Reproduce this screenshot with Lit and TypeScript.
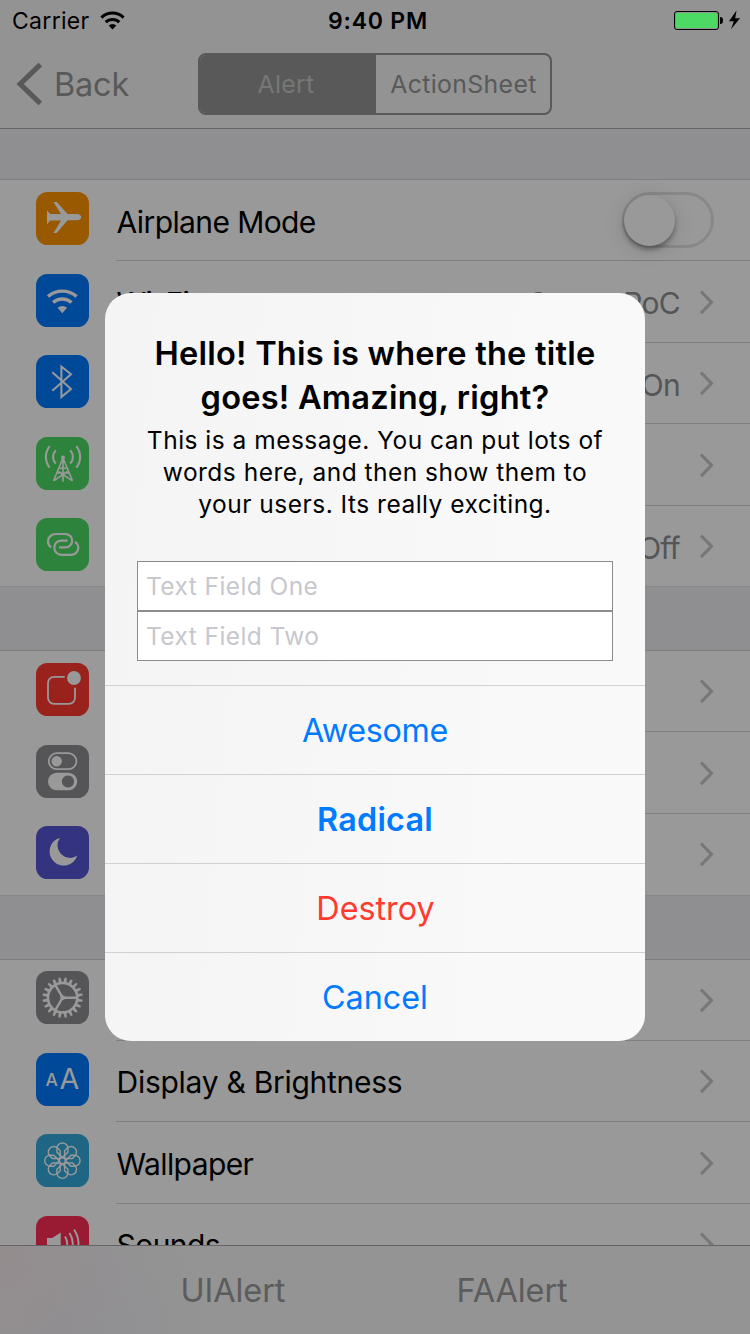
import { LitElement, html, svg, css, nothing } from "lit";
import { customElement, property } from "lit/decorators.js";
import { classMap } from "lit/directives/class-map.js";

interface Item {
  icon: string;
  label?: string;
  track?: string;
  value?: string;
  toggle?: boolean;
}

const arcs = (n: number, draw: (angle: number) => unknown) =>
  Array.from({ length: n }, (_, i) => draw((i * 360) / n));

const glyphs: Record<string, { tint: string; art: unknown }> = {
  airplane: {
    tint: "#ff9500",
    art: svg`<path fill="#fff" d="M11 18.2 14.3 22H25L17.5 10h3.2L31.6 22.1H41c2.8 0 4.2 1.6 4.2 3.1s-1.4 3.1-4.2 3.1h-9.4L20.7 41h-3.2L25 28.4H14.3L11 32.2Z"/>`,
  },
  wifi: {
    tint: "#007aff",
    art: svg`<g fill="none" stroke="#fff" stroke-width="3.4"><path d="M12 22.5a21.8 21.8 0 0 1 28.6 0"/><path d="M17.1 28.5a14 14 0 0 1 18.4 0"/></g><path fill="#fff" d="M26.3 39.2 21.6 33.8a7.2 7.2 0 0 1 9.4 0Z"/>`,
  },
  bluetooth: {
    tint: "#007aff",
    art: svg`<path fill="none" stroke="#fff" stroke-width="2" d="M16.3 17.3 35 33.9 25.4 42V11.5L35 19.2 16.3 35.7"/>`,
  },
  cellular: {
    tint: "#4cd964",
    art: svg`<g fill="none" stroke="#fff" stroke-width="1.6"><path d="M27 20.5V44.7M27 21 17.6 43.8M27 21 36.5 43.8M23.2 31.2h7.6M21.2 36h11.6M17.6 43.8 31.5 34.5M36.5 43.8 22.5 34.5"/><g stroke-width="2.1"><path d="M19.8 13.2a9.6 9.6 0 0 0 0 13.4M34.2 13.2a9.6 9.6 0 0 1 0 13.4M13.7 9.2a17 17 0 0 0 0 21.4M40.3 9.2a17 17 0 0 1 0 21.4"/></g></g><circle cx="27" cy="20.5" r="2" fill="#fff"/>`,
  },
  hotspot: {
    tint: "#4cd964",
    art: svg`<g fill="none" stroke="#fff" stroke-width="2.2"><path d="M15.2 29.3C13 27.8 12 25.6 12 23.4 12 19.2 15.5 16 19.6 16h9.6c4 0 7 2.8 7 6.6s-3 6.8-6.8 6.8H23"/><path d="M31.5 22.6h-6.2c-4 0-7 2.9-7 7s3.1 7.3 7.2 7.3h9.3c4.2 0 7.5-3 7.5-7.2 0-2.3-1.2-4.5-3.4-5.8"/></g>`,
  },
  notifications: {
    tint: "#ff3b30",
    art: svg`<path fill="none" stroke="#fff" stroke-width="1.8" d="M28.7 13.9H18a6 6 0 0 0-6 6v14.9a6 6 0 0 0 6 6h15a6 6 0 0 0 6-6V24.7"/><circle cx="38" cy="15" r="6.9" fill="#fff"/>`,
  },
  controls: {
    tint: "#8e8e93",
    art: svg`<rect x="12.8" y="8.2" width="27.6" height="16" rx="8" fill="none" stroke="#fff" stroke-width="1.8"/><circle cx="20.7" cy="16.2" r="5.2" fill="#fff"/><path fill="#fff" fill-rule="evenodd" d="M20.7 27.8h11.8a8.7 8.7 0 0 1 0 17.4H20.7a8.7 8.7 0 0 1 0-17.4ZM32 30.4a6.1 6.1 0 1 0 .01 0Z"/>`,
  },
  moon: {
    tint: "#5856d6",
    art: svg`<path fill="#fff" d="M24 11.7A14.2 14.2 0 1 0 41.3 29.6 12.6 12.6 0 0 1 24 11.7Z"/>`,
  },
  gear: {
    tint: "#8e8e93",
    art: svg`<g stroke="#fff" fill="none"><circle cx="26.6" cy="26.7" r="14.6" stroke-width="2.5"/>${arcs(
      20,
      (a) => svg`<path stroke="none" fill="#fff" d="M24.9 11.4 25.6 6.5h2L28.3 11.4Z" transform=${`rotate(${a + 9} 26.6 26.7)`}/>`,
    )}<path stroke-width="2.4" d="M26.6 26.7H41M26.6 26.7 19.2 13.9M26.6 26.7 19.2 39.5"/></g><circle cx="26.6" cy="26.7" r="2.4" fill="#fff"/>`,
  },
  display: {
    tint: "#007aff",
    art: svg`<g fill="#fff" font-family="Inter, sans-serif"><text x="9.4" y="32.8" font-size="17.4" font-weight="500">A</text><text x="23.6" y="36" font-size="28.6">A</text></g>`,
  },
  wallpaper: {
    tint: "#34aadc",
    art: svg`<g fill="none" stroke="#fff" stroke-width="1.4">${arcs(
      8,
      (a) => svg`<path d="M0-3.200-5.500-8.600v-3.600a5.500 5.500 0 0 1 11 0v3.600Z" transform=${`translate(26.4 26.7) rotate(${a})`}/>`,
    )}<circle cx="26.4" cy="26.7" r="3"/></g>`,
  },
  sounds: {
    tint: "#ff2d55",
    art: svg`<path fill="#fff" d="M11 22h5.2l8.500-5.400v21.800L16.200 33H11Z"/><g fill="none" stroke="#fff" stroke-width="1.9"><path d="M29 20.500q4.400 7 0 14M33.500 17q6.600 10.500 0 21M38 13.500q9 14 0 28"/></g>`,
  },
};

const groups: { name: string; items: Item[] }[] = [
  {
    name: "radios",
    items: [
      { icon: "airplane", label: "Airplane Mode", track: "mid", toggle: true },
      { icon: "wifi", label: "Wi-Fi", track: "mid", value: "Canon PoC" },
      { icon: "bluetooth", value: "On" },
      { icon: "cellular" },
      { icon: "hotspot", value: "Off" },
    ],
  },
  { name: "alerts", items: [{ icon: "notifications" }, { icon: "controls" }, { icon: "moon" }] },
  {
    name: "general",
    items: [
      { icon: "gear" },
      { icon: "display", label: "Display & Brightness", track: "loose" },
      { icon: "wallpaper", label: "Wallpaper", track: "mid" },
      { icon: "sounds", label: "Sounds", track: "mid" },
    ],
  },
];

@customElement("settings-row")
class SettingsRow extends LitElement {
  @property({ attribute: false }) item!: Item;

  static styles = css`
    :host {
      display: flex;
      align-items: stretch;
      box-sizing: border-box;
      padding-left: 36px;
    }
    .icon {
      align-self: flex-end;
      flex: none;
      width: 53px;
      height: 53px;
      margin-right: 27px;
      margin-bottom: var(--icon-drop, 16px);
    }
    .body {
      flex: 1;
      display: flex;
      align-items: center;
      border-bottom: 1px solid var(--sep, #d4d4d7);
      padding-right: 36px;
      font-size: 30px;
    }
    .label {
      flex: 1;
      padding-top: var(--text-drop, 2px);
      padding-left: 0.6px;
      white-space: nowrap;
      color: #000;
    }
    .mid {
      letter-spacing: -0.6px;
    }
    .loose {
      letter-spacing: -0.28px;
    }
    .value {
      color: #8e8e93;
      padding-top: var(--text-drop, 2px);
      margin-right: 19px;
      letter-spacing: -0.7px;
    }
    .chevron {
      width: 15px;
      height: 26px;
    }
    .switch {
      box-sizing: border-box;
      width: 92px;
      height: 56px;
      border: 3px solid #e3e3e3;
      border-radius: 28px;
    }
    .knob {
      width: 51px;
      height: 51px;
      margin-left: -1px;
      margin-top: -0.5px;
      border-radius: 50%;
      background: #fff;
      box-shadow: 0 4px 5px rgba(0, 0, 0, 0.3), 0 3px 22px rgba(0, 0, 0, 0.14);
    }
  `;

  render() {
    const { icon, label, track, value, toggle } = this.item;
    const glyph = glyphs[icon];
    return html`
      <svg class="icon" viewBox="0 0 53 53">
        <rect width="53" height="53" rx="11.5" fill=${glyph.tint} />
        ${glyph.art}
      </svg>
      <div class="body">
        <div class=${classMap({ label: true, mid: track === "mid", loose: track === "loose" })}>${label ?? nothing}</div>
        ${value ? html`<div class="value">${value}</div>` : nothing}
        ${toggle
          ? html`<div class="switch"><div class="knob"></div></div>`
          : html`<svg class="chevron" viewBox="0 0 15 26">
              <path d="M2 2.500 12.500 13.300 2 24.100" fill="none" stroke="#c7c7cc" stroke-width="3.100" />
            </svg>`}
      </div>
    `;
  }
}

@customElement("alert-dialog")
class AlertDialog extends LitElement {
  static styles = css`
    :host {
      display: flex;
      flex-direction: column;
      box-sizing: border-box;
      width: 540px;
      height: 748px;
      border-radius: 26px;
      overflow: hidden;
      padding-top: 38px;
      background: linear-gradient(95deg, #f4f4f4, #f6f6f6 35%, #f9f9f9 75%);
      text-align: center;
      white-space: nowrap;
    }
    .title {
      font-size: 32.6px;
      line-height: 44px;
      font-weight: 600;
      letter-spacing: 0.22px;
    }
    .message {
      margin-top: 5px;
      font-size: 24.5px;
      line-height: 32px;
      letter-spacing: 0.49px;
    }
    .fields {
      margin: 41px 32px 24px;
    }
    .field {
      display: block;
      box-sizing: border-box;
      width: 100%;
      height: 50px;
      margin: 0;
      padding: 0 8px;
      border: 1px solid #8c8c8c;
      border-radius: 0;
      background: #fff;
      font: 24.5px Inter, sans-serif;
      letter-spacing: 0.42px;
    }
    .field::placeholder {
      color: #c7c7cd;
      opacity: 1;
    }
    .action {
      display: flex;
      align-items: center;
      justify-content: center;
      height: 88px;
      border-top: 1px solid #d0d0d2;
      font-size: 32.3px;
      color: #007aff;
    }
    .first {
      letter-spacing: -0.3px;
    }
    .strong {
      font-weight: 600;
      letter-spacing: 0.25px;
    }
    .danger {
      color: #ff3b30;
      padding-left: 1px;
    }
  `;

  render() {
    return html`
      <div class="title">Hello! This is where the title<br />goes! Amazing, right?</div>
      <div class="message">
        This is a message. You can put lots of<br />words here, and then show them to<br />your users. Its really
        exciting.
      </div>
      <div class="fields">
        <input class="field" placeholder="Text Field One" />
        <input class="field" placeholder="Text Field Two" />
      </div>
      <div class="action first">Awesome</div>
      <div class="action strong">Radical</div>
      <div class="action danger">Destroy</div>
      <div class="action">Cancel</div>
    `;
  }
}

@customElement("app-root")
class AppRoot extends LitElement {
  static styles = css`
    :host {
      position: relative;
      display: flex;
      flex-direction: column;
      width: 750px;
      height: 1334px;
      overflow: hidden;
      background: #efeff4;
      font-family: Inter, sans-serif;
      color: #000;
    }
    .header {
      flex: none;
      box-sizing: border-box;
      height: 129px;
      background: #f6f6f6;
      border-bottom: 1px solid #a9a9ac;
    }
    .status {
      position: relative;
      z-index: 2;
      display: grid;
      grid-template-columns: 1fr auto 1fr;
      align-items: center;
      height: 41px;
      padding: 0 9px 0 12px;
      font-size: 23px;
    }
    .carrier {
      display: flex;
      align-items: center;
      gap: 10px;
      letter-spacing: 0.3px;
    }
    .time {
      font-weight: 600;
      letter-spacing: 0.8px;
      padding-left: 3px;
    }
    .power {
      justify-self: end;
      display: block;
      margin-bottom: 1px;
    }
    .nav {
      display: grid;
      grid-template-columns: 198px 354px;
      align-items: center;
      height: 86px;
      color: #949494;
    }
    .back {
      display: flex;
      align-items: center;
      gap: 12px;
      padding-left: 15px;
      font-size: 32.4px;
      letter-spacing: -0.15px;
    }
    .segments {
      box-sizing: border-box;
      display: flex;
      height: 62px;
      border: 2px solid #949494;
      border-radius: 8px;
      overflow: hidden;
      font-size: 24.8px;
      letter-spacing: 0.35px;
    }
    .segment {
      flex: 1;
      display: flex;
      align-items: center;
      justify-content: center;
      padding-left: 1px;
    }
    .on {
      flex: none;
      box-sizing: border-box;
      width: 176px;
      padding: 0 4px 0 0;
      background: #949494;
      color: #c6c6c6;
    }
    .list {
      flex: 1;
      min-height: 0;
      overflow: hidden;
      padding-top: 50px;
    }
    .group {
      background: #fff;
      border-top: 1px solid #d4d4d7;
      border-bottom: 1px solid #e4e4e8;
      margin-bottom: 63px;
    }
    .row {
      height: 81px;
    }
    .row:last-child {
      --sep: transparent;
    }
    .radios .row:nth-child(even),
    .alerts .row:nth-child(even) {
      height: 82px;
    }
    .radios .row:nth-child(odd) {
      --text-drop: 4px;
    }
    .radios .row:last-child {
      height: 80px;
      --icon-drop: 15px;
    }
    .general .row:nth-child(3) {
      height: 82px;
    }
    .general .row:nth-child(odd) {
      --icon-drop: 17px;
    }
    .toolbar {
      position: relative;
      flex: none;
      display: grid;
      grid-template-columns: 186px 280px 1fr;
      align-items: center;
      height: 88px;
      border-top: 1px solid #a9a9ac;
      background: radial-gradient(circle at 0 10px, #f7ebed, transparent 150px),
        radial-gradient(circle at 60px 88px, #eeeef6, transparent 150px), #f7f7f7;
      color: #9a9a9a;
      font-size: 32.5px;
      letter-spacing: -0.1px;
    }
    .tool {
      grid-column: 2;
      margin-left: -5.5px;
    }
    .tool + .tool {
      grid-column: 3;
      margin-left: -9.5px;
    }
    .scrim {
      position: absolute;
      inset: 0;
      z-index: 1;
      background: rgba(0, 0, 0, 0.4);
    }
    .dialog {
      position: absolute;
      left: 105px;
      top: 293px;
      z-index: 3;
    }
  `;

  render() {
    return html`
      <div class="header">
        <div class="status">
          <div class="carrier">
            Carrier
            <svg width="25" height="19" viewBox="0 0 25 19">
              <g fill="none" stroke="#000" stroke-width="3">
                <path d="M1.400 6.600a16 16 0 0 1 22.200 0" />
                <path d="M5.700 11.200a9.800 9.800 0 0 1 13.600 0" />
              </g>
              <path d="M12.500 18.500 8.700 14.600a5.500 5.500 0 0 1 7.600 0Z" />
            </svg>
          </div>
          <div class="time">9:40 PM</div>
          <svg class="power" width="68" height="20" viewBox="0 0 68 20">
            <rect x="1.500" y="1.500" width="44" height="18" rx="2.500" fill="none" stroke="#000" />
            <rect x="3" y="3" width="41" height="15" rx="1" fill="#4cd964" />
            <path d="M47 7c2.600 0 3 1.600 3 3.500s-.4 3.500-3 3.500Z" />
            <path d="M63.500.5 56 11.300h4.800L58 19.300 67 8.200h-4.800Z" />
          </svg>
        </div>
        <div class="nav">
          <div class="back">
            <svg width="27" height="44" viewBox="0 0 27 44">
              <path d="M25.300 2.500 5.200 22 25.300 41.500" fill="none" stroke="#949494" stroke-width="5.200" />
            </svg>
            Back
          </div>
          <div class="segments">
            <div class="segment on">Alert</div>
            <div class="segment">ActionSheet</div>
          </div>
        </div>
      </div>
      <div class="list">
        ${groups.map(
          (group) => html`<div class="group ${group.name}">
            ${group.items.map((item) => html`<settings-row class="row" .item=${item}></settings-row>`)}
          </div>`,
        )}
      </div>
      <div class="toolbar">
        <div class="tool">UIAlert</div>
        <div class="tool">FAAlert</div>
      </div>
      <div class="scrim"></div>
      <alert-dialog class="dialog"></alert-dialog>
    `;
  }
}
